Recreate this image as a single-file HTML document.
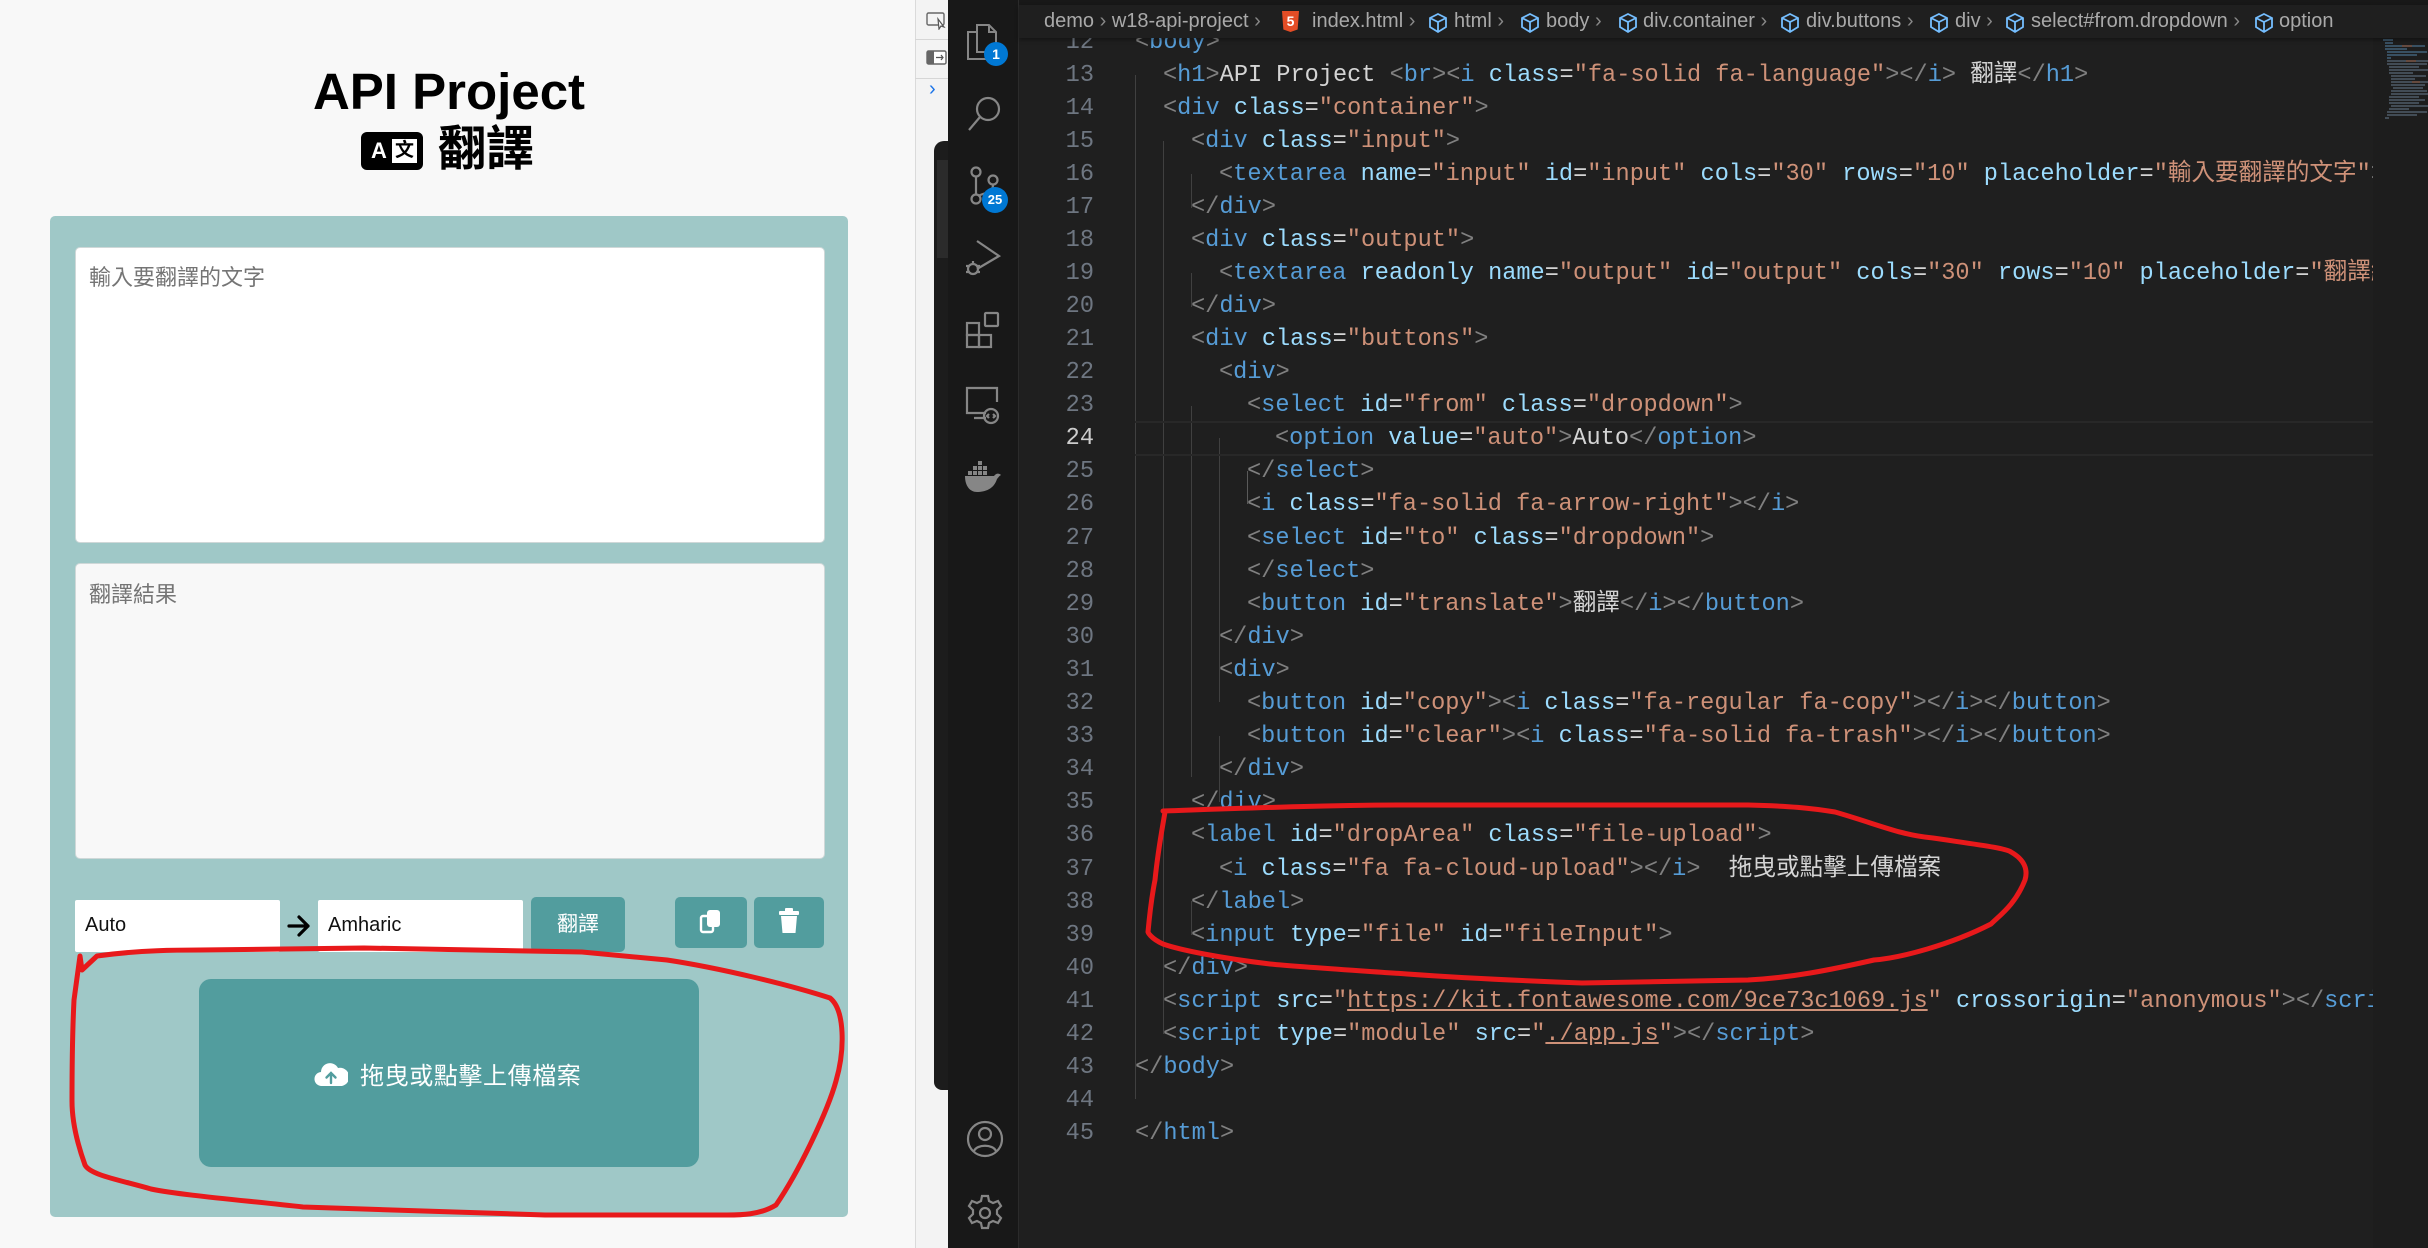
<!DOCTYPE html>
<html><head><meta charset="utf-8">
<style>
*{margin:0;padding:0;box-sizing:border-box}
body{width:2428px;height:1248px;overflow:hidden;position:relative;background:#1f1f1f;font-family:"Liberation Sans","Noto Sans CJK TC",sans-serif}
.abs{position:absolute}
#left{left:0;top:0;width:915px;height:1248px;background:#f8f8f8}
.cjk{font-family:"Liberation Sans","Noto Sans CJK TC",sans-serif}
#code{position:absolute;left:1019px;top:0;width:1354px;height:1248px;overflow:hidden}
#inner{position:absolute;left:0;top:17px;width:1354px;height:1248px}
.ln{position:absolute;left:0;width:75px;text-align:right;font-family:"Liberation Mono","Noto Sans CJK TC",monospace;font-size:23.6px;line-height:33px;color:#6e7681}
.cl{position:absolute;white-space:pre;font-family:"Liberation Mono","Noto Sans CJK TC",monospace;font-size:23.6px;line-height:33px;color:#cccccc}
.t{color:#808080}.n{color:#569cd6}.a{color:#9cdcfe}.s{color:#ce9178}.x{color:#d4d4d4}
.u{text-decoration:underline}
.g{position:absolute;width:1px;background:#404040}
.bc{position:absolute;top:10px;font-size:20px;color:#a9a9a9;font-family:"Liberation Sans",sans-serif;white-space:nowrap}
</style></head><body>

<div id="left" class="abs">
  <div class="abs" style="left:0;width:898px;top:62px;text-align:center;font-weight:bold;font-size:51px;color:#000">API Project</div>
  <div class="abs" style="left:361px;top:132px;width:62px;height:38px;background:#000;border-radius:6px"></div>
  <div class="abs" style="left:368px;top:136px;width:22px;height:30px;color:#fff;font-weight:bold;font-size:22px;line-height:30px;text-align:center">A</div>
  <div class="abs" style="left:392px;top:139px;width:25px;height:24px;background:#fff;color:#000;font-size:19px;line-height:24px;text-align:center;font-weight:bold">文</div>
  <div class="abs cjk" style="left:438px;top:118px;font-size:48px;font-weight:bold;color:#000;line-height:64px">翻譯</div>

  <div class="abs" style="left:50px;top:216px;width:798px;height:1001px;background:#9fc8c7;border-radius:5px"></div>
  <div class="abs" style="left:75px;top:247px;width:750px;height:296px;background:#fff;border:1px solid #cfd8d8;border-radius:5px"></div>
  <div class="abs cjk" style="left:89px;top:260px;font-size:22px;color:#757575">輸入要翻譯的文字</div>
  <div class="abs" style="left:75px;top:563px;width:750px;height:296px;background:#f8f8f8;border:1px solid #cfd8d8;border-radius:5px"></div>
  <div class="abs cjk" style="left:89px;top:577px;font-size:22px;color:#757575">翻譯結果</div>

  <div class="abs" style="left:75px;top:900px;width:205px;height:52px;background:#fff;border-radius:2px"></div>
  <div class="abs" style="left:85px;top:914px;font-size:20px;color:#111">Auto</div>
  <svg class="abs" style="left:286px;top:913px" width="26" height="26" viewBox="0 0 26 26"><path d="M3 13H22M13 4l9 9-9 9" stroke="#000" stroke-width="3.2" fill="none" stroke-linecap="round" stroke-linejoin="round"/></svg>
  <div class="abs" style="left:318px;top:900px;width:205px;height:52px;background:#fff;border-radius:2px"></div>
  <div class="abs" style="left:328px;top:914px;font-size:20px;color:#111">Amharic</div>
  <div class="abs cjk" style="left:531px;top:897px;width:94px;height:55px;background:#529d9e;border-radius:5px;color:#fff;font-size:21px;line-height:55px;text-align:center">翻譯</div>
  <div class="abs" style="left:675px;top:897px;width:72px;height:51px;background:#529d9e;border-radius:5px"></div>
  <svg class="abs" style="left:699px;top:908px" width="26" height="28" viewBox="0 0 26 28"><rect x="2" y="8" width="12" height="16" rx="2" fill="none" stroke="#fff" stroke-width="2.4"/><rect x="8" y="2" width="13" height="17" rx="3" fill="#fff"/></svg>
  <div class="abs" style="left:754px;top:897px;width:70px;height:51px;background:#529d9e;border-radius:5px"></div>
  <svg class="abs" style="left:778px;top:908px" width="22" height="26" viewBox="0 0 22 26"><rect x="1" y="3" width="20" height="4" rx="1" fill="#fff"/><rect x="7" y="0" width="8" height="4" rx="1" fill="#fff"/><path d="M3 8h16l-1.5 17h-13z" fill="#fff"/></svg>

  <div class="abs" style="left:199px;top:979px;width:500px;height:188px;background:#529d9e;border-radius:12px"></div>
  <svg class="abs" style="left:314px;top:1060px" width="34" height="28" viewBox="0 0 34 28"><path d="M8 26a7 7 0 0 1-1-14 9 9 0 0 1 17-4 7 7 0 0 1 4 18z" fill="#fff"/><path d="M17 23V13M12.5 17.5 17 13l4.5 4.5" stroke="#529d9e" stroke-width="2.4" fill="none" stroke-linecap="round"/></svg>
  <div class="abs cjk" style="left:360px;top:1056px;font-size:24px;color:#fff;letter-spacing:0.6px">拖曳或點擊上傳檔案</div>
</div>

<!-- devtools strip -->
<div class="abs" style="left:915px;top:0;width:33px;height:1248px;background:#f3f3f3;border-left:1px solid #dadada"></div>
<div class="abs" style="left:915px;top:39px;width:33px;height:1px;background:#d6d6d6"></div>
<div class="abs" style="left:915px;top:78px;width:33px;height:1px;background:#d6d6d6"></div>
<svg class="abs" style="left:926px;top:12px" width="22" height="18" viewBox="0 0 22 18"><rect x="1" y="1" width="17" height="12" rx="1.5" fill="none" stroke="#666" stroke-width="1.4"/><path d="M12 7l6 8-3-1-2 3z" fill="#fff" stroke="#555" stroke-width="1.2"/></svg>
<svg class="abs" style="left:926px;top:50px" width="22" height="16" viewBox="0 0 22 16"><rect x="1" y="1" width="19" height="13" rx="1.5" fill="#fff" stroke="#666" stroke-width="1.4"/><rect x="1" y="1" width="7" height="13" fill="#666"/><path d="M10 7.5h7M15 5l2 2.5-2 2.5" stroke="#555" stroke-width="1.2" fill="none"/></svg>
<div class="abs" style="left:929px;top:78px;color:#1a73e8;font-size:20px">›</div>
<div class="abs" style="left:934px;top:141px;width:14px;height:949px;background:#1c1c1c;border-radius:10px 0 0 8px"></div>
<div class="abs" style="left:937px;top:160px;width:11px;height:98px;background:#2b2b2b"></div>

<!-- activity bar -->
<div class="abs" style="left:948px;top:0;width:71px;height:1248px;background:#181818;border-right:1px solid #2b2b2b"></div>
<svg class="abs" style="left:963px;top:22px" width="40" height="40" viewBox="0 0 40 40" fill="none" stroke="#868686" stroke-width="2"><path d="M14 3h12l7 7v20H14z M26 3v7h7 M14 10H5v27h20v-7"/></svg>
<div class="abs" style="left:984px;top:42px;width:24px;height:24px;border-radius:12px;background:#0078d4;color:#fff;font-size:14px;font-weight:bold;text-align:center;line-height:24px">1</div>
<svg class="abs" style="left:966px;top:94px" width="38" height="40" viewBox="0 0 38 40" fill="none" stroke="#868686" stroke-width="2.2"><circle cx="22" cy="15" r="11"/><path d="M14 23 3 36"/></svg>
<svg class="abs" style="left:968px;top:165px" width="34" height="40" viewBox="0 0 34 40" fill="none" stroke="#868686" stroke-width="2.2"><circle cx="8" cy="7" r="4.5"/><circle cx="25" cy="15" r="4.5"/><circle cx="8" cy="34" r="4.5"/><path d="M8 12v17M25 20c0 8-10 8-15 11"/></svg>
<div class="abs" style="left:982px;top:187px;width:26px;height:26px;border-radius:13px;background:#0078d4;color:#fff;font-size:13px;font-weight:bold;text-align:center;line-height:26px">25</div>
<svg class="abs" style="left:964px;top:238px" width="40" height="40" viewBox="0 0 40 40" fill="none" stroke="#868686" stroke-width="2.2"><path d="M13 3l22 15-22 13"/><circle cx="9" cy="31" r="5"/><path d="M2 28h3M13 28h3M2 34h3M13 34h3M9 25v-2"/></svg>
<svg class="abs" style="left:964px;top:310px" width="40" height="40" viewBox="0 0 40 40" fill="none" stroke="#868686" stroke-width="2.2"><rect x="3" y="13" width="12" height="12"/><rect x="3" y="25" width="12" height="12"/><rect x="15" y="25" width="12" height="12"/><rect x="21" y="3" width="13" height="13" rx="1"/></svg>
<svg class="abs" style="left:964px;top:385px" width="40" height="40" viewBox="0 0 40 40" fill="none" stroke="#868686" stroke-width="2.2"><path d="M22 28H3V3h30v14M10 33h12"/><circle cx="27" cy="31" r="7"/><path d="M25 29l-2 2 2 2M29 29l2 2-2 2"/></svg>
<svg class="abs" style="left:964px;top:458px" width="40" height="36" viewBox="0 0 40 36" fill="#868686"><rect x="9" y="8" width="4" height="4"/><rect x="14" y="8" width="4" height="4"/><rect x="19" y="8" width="4" height="4"/><rect x="14" y="3" width="4" height="4"/><rect x="4" y="13" width="4" height="4"/><rect x="9" y="13" width="4" height="4"/><rect x="14" y="13" width="4" height="4"/><rect x="19" y="13" width="4" height="4"/><path d="M1 18h29c2-3 5-3 7-1-2 1-3 3-4 4-3 10-12 13-20 13C6 34 1 28 1 18z"/></svg>
<svg class="abs" style="left:966px;top:1119px" width="38" height="40" viewBox="0 0 38 40" fill="none" stroke="#868686" stroke-width="2.2"><circle cx="19" cy="20" r="17"/><circle cx="19" cy="15" r="6"/><path d="M8 32c3-7 19-7 22 0"/></svg>
<svg class="abs" style="left:966px;top:1193px" width="38" height="40" viewBox="0 0 38 40" fill="none" stroke="#868686" stroke-width="2.2"><path d="M16 3h6l1 5 4 2 5-2 3 5-4 4v4l4 4-3 5-5-2-4 2-1 5h-6l-1-5-4-2-5 2-3-5 4-4v-4l-4-4 3-5 5 2 4-2z"/><circle cx="19" cy="20" r="5"/></svg>

<!-- code -->
<div id="code"><div id="inner">
  <div class="g" style="left:116px;top:58px;height:1024px"></div>
  <div class="g" style="left:144px;top:124px;height:893px"></div>
  <div class="g" style="left:172px;top:157px;height:34px"></div>
  <div class="g" style="left:172px;top:256px;height:34px"></div>
  <div class="g" style="left:172px;top:389px;height:371px"></div>
  <div class="g" style="left:200px;top:421px;height:264px"></div>
  <div class="g" style="left:228px;top:454px;height:33px;background:#5a5a5a"></div>
  <div class="g" style="left:200px;top:719px;height:66px"></div>
  <div class="g" style="left:172px;top:884px;height:34px"></div>
  <div class="abs" style="left:116px;top:404px;width:1238px;height:35px;border-top:2px solid #282828;border-bottom:2px solid #282828"></div>

  <div class="ln" style="top:9px">12</div>
  <div class="ln" style="top:42px">13</div><div class="ln" style="top:75px">14</div><div class="ln" style="top:108px">15</div><div class="ln" style="top:141px">16</div><div class="ln" style="top:174px">17</div><div class="ln" style="top:207px">18</div><div class="ln" style="top:240px">19</div><div class="ln" style="top:273px">20</div><div class="ln" style="top:306px">21</div><div class="ln" style="top:339px">22</div><div class="ln" style="top:372px">23</div><div class="ln" style="top:405px;color:#cccccc">24</div><div class="ln" style="top:438px">25</div><div class="ln" style="top:471px">26</div><div class="ln" style="top:505px">27</div><div class="ln" style="top:538px">28</div><div class="ln" style="top:571px">29</div><div class="ln" style="top:604px">30</div><div class="ln" style="top:637px">31</div><div class="ln" style="top:670px">32</div><div class="ln" style="top:703px">33</div><div class="ln" style="top:736px">34</div><div class="ln" style="top:769px">35</div><div class="ln" style="top:802px">36</div><div class="ln" style="top:836px">37</div><div class="ln" style="top:869px">38</div><div class="ln" style="top:902px">39</div><div class="ln" style="top:935px">40</div><div class="ln" style="top:968px">41</div><div class="ln" style="top:1001px">42</div><div class="ln" style="top:1034px">43</div><div class="ln" style="top:1067px">44</div><div class="ln" style="top:1100px">45</div>

  <div class="cl" style="top:9px;left:116px"><span class="t">&lt;</span><span class="n">body</span><span class="t">&gt;</span></div>
  <div class="cl" style="top:42px;left:144px"><span class="t">&lt;</span><span class="n">h1</span><span class="t">&gt;</span><span class="x">API Project </span><span class="t">&lt;</span><span class="n">br</span><span class="t">&gt;&lt;</span><span class="n">i</span> <span class="a">class</span><span class="x">=</span><span class="s">"fa-solid fa-language"</span><span class="t">&gt;&lt;/</span><span class="n">i</span><span class="t">&gt;</span><span class="x"> 翻譯</span><span class="t">&lt;/</span><span class="n">h1</span><span class="t">&gt;</span></div>
  <div class="cl" style="top:75px;left:144px"><span class="t">&lt;</span><span class="n">div</span> <span class="a">class</span><span class="x">=</span><span class="s">"container"</span><span class="t">&gt;</span></div>
  <div class="cl" style="top:108px;left:172px"><span class="t">&lt;</span><span class="n">div</span> <span class="a">class</span><span class="x">=</span><span class="s">"input"</span><span class="t">&gt;</span></div>
  <div class="cl" style="top:141px;left:200px"><span class="t">&lt;</span><span class="n">textarea</span> <span class="a">name</span><span class="x">=</span><span class="s">"input"</span> <span class="a">id</span><span class="x">=</span><span class="s">"input"</span> <span class="a">cols</span><span class="x">=</span><span class="s">"30"</span> <span class="a">rows</span><span class="x">=</span><span class="s">"10"</span> <span class="a">placeholder</span><span class="x">=</span><span class="s">"輸入要翻譯的文字"</span><span class="t">&gt;</span></div>
  <div class="cl" style="top:174px;left:172px"><span class="t">&lt;/</span><span class="n">div</span><span class="t">&gt;</span></div>
  <div class="cl" style="top:207px;left:172px"><span class="t">&lt;</span><span class="n">div</span> <span class="a">class</span><span class="x">=</span><span class="s">"output"</span><span class="t">&gt;</span></div>
  <div class="cl" style="top:240px;left:200px"><span class="t">&lt;</span><span class="n">textarea</span> <span class="a">readonly</span> <span class="a">name</span><span class="x">=</span><span class="s">"output"</span> <span class="a">id</span><span class="x">=</span><span class="s">"output"</span> <span class="a">cols</span><span class="x">=</span><span class="s">"30"</span> <span class="a">rows</span><span class="x">=</span><span class="s">"10"</span> <span class="a">placeholder</span><span class="x">=</span><span class="s">"翻譯結果"</span><span class="t">&gt;</span></div>
  <div class="cl" style="top:273px;left:172px"><span class="t">&lt;/</span><span class="n">div</span><span class="t">&gt;</span></div>
  <div class="cl" style="top:306px;left:172px"><span class="t">&lt;</span><span class="n">div</span> <span class="a">class</span><span class="x">=</span><span class="s">"buttons"</span><span class="t">&gt;</span></div>
  <div class="cl" style="top:339px;left:200px"><span class="t">&lt;</span><span class="n">div</span><span class="t">&gt;</span></div>
  <div class="cl" style="top:372px;left:228px"><span class="t">&lt;</span><span class="n">select</span> <span class="a">id</span><span class="x">=</span><span class="s">"from"</span> <span class="a">class</span><span class="x">=</span><span class="s">"dropdown"</span><span class="t">&gt;</span></div>
  <div class="cl" style="top:405px;left:256px"><span class="t">&lt;</span><span class="n">option</span> <span class="a">value</span><span class="x">=</span><span class="s">"auto"</span><span class="t">&gt;</span><span class="x">Auto</span><span class="t">&lt;/</span><span class="n">option</span><span class="t">&gt;</span></div>
  <div class="cl" style="top:438px;left:228px"><span class="t">&lt;/</span><span class="n">select</span><span class="t">&gt;</span></div>
  <div class="cl" style="top:471px;left:228px"><span class="t">&lt;</span><span class="n">i</span> <span class="a">class</span><span class="x">=</span><span class="s">"fa-solid fa-arrow-right"</span><span class="t">&gt;&lt;/</span><span class="n">i</span><span class="t">&gt;</span></div>
  <div class="cl" style="top:505px;left:228px"><span class="t">&lt;</span><span class="n">select</span> <span class="a">id</span><span class="x">=</span><span class="s">"to"</span> <span class="a">class</span><span class="x">=</span><span class="s">"dropdown"</span><span class="t">&gt;</span></div>
  <div class="cl" style="top:538px;left:228px"><span class="t">&lt;/</span><span class="n">select</span><span class="t">&gt;</span></div>
  <div class="cl" style="top:571px;left:228px"><span class="t">&lt;</span><span class="n">button</span> <span class="a">id</span><span class="x">=</span><span class="s">"translate"</span><span class="t">&gt;</span><span class="x">翻譯</span><span class="t">&lt;/</span><span class="n">i</span><span class="t">&gt;&lt;/</span><span class="n">button</span><span class="t">&gt;</span></div>
  <div class="cl" style="top:604px;left:200px"><span class="t">&lt;/</span><span class="n">div</span><span class="t">&gt;</span></div>
  <div class="cl" style="top:637px;left:200px"><span class="t">&lt;</span><span class="n">div</span><span class="t">&gt;</span></div>
  <div class="cl" style="top:670px;left:228px"><span class="t">&lt;</span><span class="n">button</span> <span class="a">id</span><span class="x">=</span><span class="s">"copy"</span><span class="t">&gt;&lt;</span><span class="n">i</span> <span class="a">class</span><span class="x">=</span><span class="s">"fa-regular fa-copy"</span><span class="t">&gt;&lt;/</span><span class="n">i</span><span class="t">&gt;&lt;/</span><span class="n">button</span><span class="t">&gt;</span></div>
  <div class="cl" style="top:703px;left:228px"><span class="t">&lt;</span><span class="n">button</span> <span class="a">id</span><span class="x">=</span><span class="s">"clear"</span><span class="t">&gt;&lt;</span><span class="n">i</span> <span class="a">class</span><span class="x">=</span><span class="s">"fa-solid fa-trash"</span><span class="t">&gt;&lt;/</span><span class="n">i</span><span class="t">&gt;&lt;/</span><span class="n">button</span><span class="t">&gt;</span></div>
  <div class="cl" style="top:736px;left:200px"><span class="t">&lt;/</span><span class="n">div</span><span class="t">&gt;</span></div>
  <div class="cl" style="top:769px;left:172px"><span class="t">&lt;/</span><span class="n">div</span><span class="t">&gt;</span></div>
  <div class="cl" style="top:802px;left:172px"><span class="t">&lt;</span><span class="n">label</span> <span class="a">id</span><span class="x">=</span><span class="s">"dropArea"</span> <span class="a">class</span><span class="x">=</span><span class="s">"file-upload"</span><span class="t">&gt;</span></div>
  <div class="cl" style="top:836px;left:200px"><span class="t">&lt;</span><span class="n">i</span> <span class="a">class</span><span class="x">=</span><span class="s">"fa fa-cloud-upload"</span><span class="t">&gt;&lt;/</span><span class="n">i</span><span class="t">&gt;</span><span class="x">  拖曳或點擊上傳檔案</span></div>
  <div class="cl" style="top:869px;left:172px"><span class="t">&lt;/</span><span class="n">label</span><span class="t">&gt;</span></div>
  <div class="cl" style="top:902px;left:172px"><span class="t">&lt;</span><span class="n">input</span> <span class="a">type</span><span class="x">=</span><span class="s">"file"</span> <span class="a">id</span><span class="x">=</span><span class="s">"fileInput"</span><span class="t">&gt;</span></div>
  <div class="cl" style="top:935px;left:144px"><span class="t">&lt;/</span><span class="n">div</span><span class="t">&gt;</span></div>
  <div class="cl" style="top:968px;left:144px"><span class="t">&lt;</span><span class="n">script</span> <span class="a">src</span><span class="x">=</span><span class="s">"<span class="u">https://kit.fontawesome.com/9ce73c1069.js</span>"</span> <span class="a">crossorigin</span><span class="x">=</span><span class="s">"anonymous"</span><span class="t">&gt;&lt;/</span><span class="n">script</span><span class="t">&gt;</span></div>
  <div class="cl" style="top:1001px;left:144px"><span class="t">&lt;</span><span class="n">script</span> <span class="a">type</span><span class="x">=</span><span class="s">"module"</span> <span class="a">src</span><span class="x">=</span><span class="s">"<span class="u">./app.js</span>"</span><span class="t">&gt;&lt;/</span><span class="n">script</span><span class="t">&gt;</span></div>
  <div class="cl" style="top:1034px;left:116px"><span class="t">&lt;/</span><span class="n">body</span><span class="t">&gt;</span></div>
  <div class="cl" style="top:1100px;left:116px"><span class="t">&lt;/</span><span class="n">html</span><span class="t">&gt;</span></div>
</div></div>

<!-- scrollbar / minimap -->
<div class="abs" style="left:2373px;top:38px;width:55px;height:1210px;background:#1d1d1d"></div>
<svg class="abs" style="left:2382px;top:38px" width="46" height="90" viewBox="0 0 46 90">
<g stroke-width="1.3"><path d="M1 2h10M3 5h8M3 8h40M3 11h22M5 14h40M5 17h30M5 20h4" stroke="#4a6f8c"/><path d="M5 23h44M5 26h40M7 29h30M7 32h40M7 35h24M9 38h35M9 41h24M9 44h40M9 47h34M11 50h30M9 53h36M9 56h40M7 59h30M7 62h36M7 65h30M9 68h40M7 71h20M5 74h40M5 77h30M3 80h4" stroke="#5a6a7a"/><path d="M20 8h10M24 23h10M30 44h8" stroke="#8a5a46"/></g></svg>

<!-- breadcrumb -->
<div class="abs" style="left:1019px;top:0;width:1409px;height:5px;background:#181818"></div>
<div class="abs" style="left:1019px;top:5px;width:1409px;height:33px;background:#1f1f1f;box-shadow:0 2px 4px rgba(0,0,0,.35)"></div>
<div class="bc" style="left:1044px">demo <span style="color:#888">›</span> w18-api-project <span style="color:#888">›</span></div>
<div class="abs" style="left:1282px;top:11px;width:17px;height:21px;background:#e44d26;clip-path:polygon(0 0,100% 0,92% 88%,50% 100%,8% 88%);color:#fff;font-size:14px;font-weight:bold;text-align:center;line-height:21px">5</div>
<div class="bc" style="left:1312px">index.html <span style="color:#888">›</span></div>
<svg class="abs" style="left:1428px;top:12px" width="1000" height="22" viewBox="0 0 1000 22" fill="none" stroke="#75beff" stroke-width="1.8">
<g id="cb"><path d="M10 2l8 4v9l-8 5-8-5V6z M2 6l8 4 8-4 M10 10v10"/></g>
<use href="#cb" x="92"/><use href="#cb" x="190"/><use href="#cb" x="352"/><use href="#cb" x="501"/><use href="#cb" x="577"/><use href="#cb" x="826"/>
</svg>
<div class="bc" style="left:1454px">html <span style="color:#888">›</span></div>
<div class="bc" style="left:1546px">body <span style="color:#888">›</span></div>
<div class="bc" style="left:1643px">div.container <span style="color:#888">›</span></div>
<div class="bc" style="left:1806px">div.buttons <span style="color:#888">›</span></div>
<div class="bc" style="left:1955px">div <span style="color:#888">›</span></div>
<div class="bc" style="left:2031px">select#from.dropdown <span style="color:#888">›</span></div>
<div class="bc" style="left:2279px">option</div>

<!-- red annotations -->
<svg class="abs" style="left:0;top:0" width="2428" height="1248" viewBox="0 0 2428 1248" fill="none" stroke="#e8191b" stroke-width="5" stroke-linejoin="round" stroke-linecap="round">
<path d="M80 956 L82 970 L97 956 C140 950 180 950 200 950 L364 948 L582 952 L667 960 C720 968 790 985 830 998 C845 1010 845 1050 836 1081 C828 1110 800 1170 776 1205 C760 1215 740 1215 727 1215 L545 1215 L303 1207 C240 1200 180 1195 151 1189 C120 1180 90 1175 85 1165 C76 1140 72 1120 72 1101 C72 1060 73 1020 74 1000 L80 956"/>
<path d="M1163 811 C1250 808 1330 805 1416 805 L1748 805 C1790 806 1810 808 1835 812 C1880 825 1900 835 1933 838 C1980 845 2005 848 2011 852 C2025 860 2028 870 2025 880 C2015 905 2000 915 1991 924 C1950 945 1900 958 1874 960 C1830 970 1790 978 1748 980 L1582 983 C1500 980 1450 977 1407 974 C1350 970 1300 967 1270 964 C1220 958 1180 950 1163 944 C1150 938 1148 932 1148 932 C1150 910 1152 895 1155 880 C1158 850 1162 830 1165 812"/>
</svg>
</body></html>
